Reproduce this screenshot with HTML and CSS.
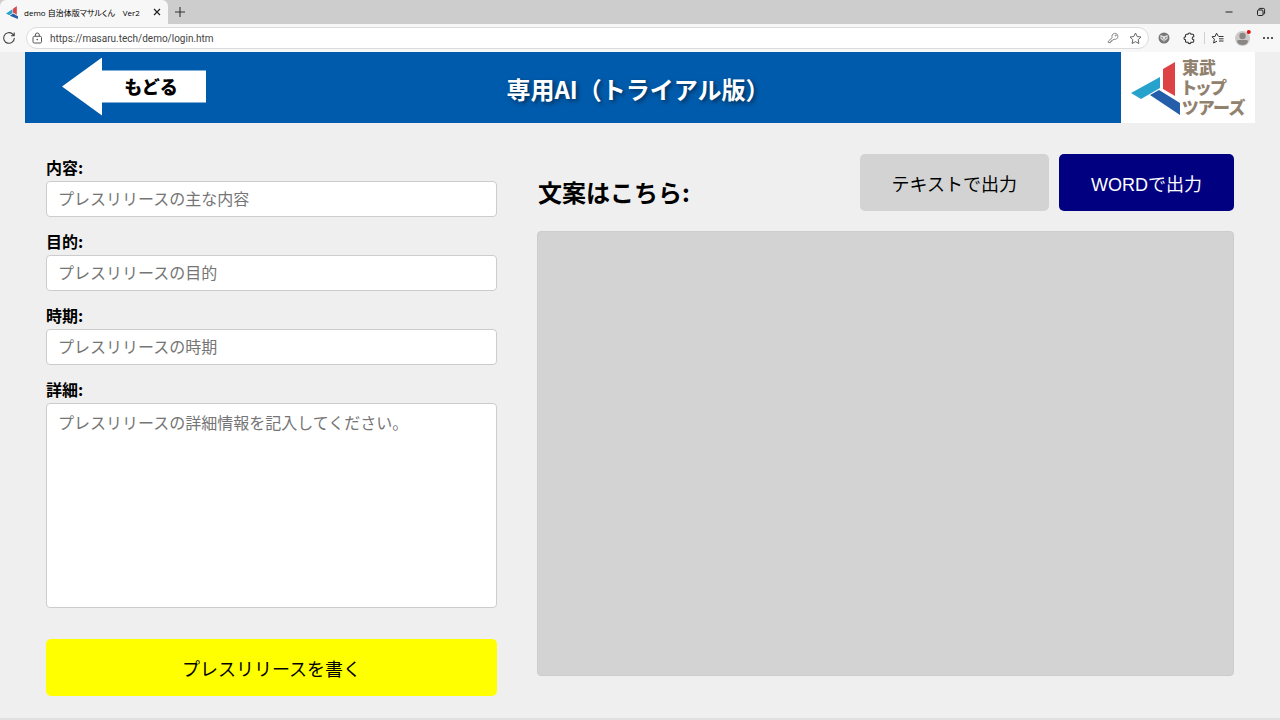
FILE: index.html
```html
<!DOCTYPE html>
<html lang="ja">
<head>
<meta charset="utf-8">
<title>demo 自治体版マサルくん Ver2</title>
<link rel="stylesheet" href="styles.css">
</head>
<body>
<div class="tabs">
  <div class="tab">
    <svg class="favicon" width="13" height="13" viewBox="0 0 12 12"><path d="M6.500 2.500L10 0v8L6.500 6z" fill="#d9474b"/><path d="M0 7l6-4v3.500L3 8.500z" fill="#27a2cc"/><path d="M3.500 9l3-2L11 9.500V12z" fill="#2460a8"/></svg>
    <span class="tab-title">demo 自治体版マサルくん　Ver2</span>
    <button class="icon" aria-label="タブを閉じる"><svg width="10" height="10" viewBox="0 0 10 10"><path d="M2 2l6 6M8 2L2 8" stroke="#222" stroke-width="1.2"/></svg></button>
  </div>
  <button class="icon new-tab" aria-label="新しいタブ"><svg width="12" height="12" viewBox="0 0 12 12"><path d="M6 1v10M1 6h10" stroke="#333" stroke-width="1.1"/></svg></button>
  <div class="window-buttons">
    <button class="icon" aria-label="最小化"><svg width="10" height="10" viewBox="0 0 10 10"><path d="M1.500 5h7" stroke="#222"/></svg></button>
    <button class="icon" aria-label="元に戻す"><svg width="10" height="10" viewBox="0 0 10 10" fill="none" stroke="#222"><rect x="1.500" y="3" width="5.500" height="5.500" rx="1"/><path d="M3 3V2q0-.6.600-.6H7.400q1.200 0 1.200 1.200v3.600q0 .8-.8.800H7"/></svg></button>
  </div>
</div>
<div class="toolbar">
  <button class="icon" aria-label="更新"><svg width="14" height="14" viewBox="0 0 14 14" fill="none" stroke="#444" stroke-width="1.100"><path d="M12.300 7A5.300 5.300 0 1 1 10.500 3L12 4.500M12.200 1.500v3.200H9"/></svg></button>
  <div class="address">
    <svg width="11" height="12" viewBox="0 0 11 12" fill="none" stroke="#555"><rect x="1" y="4.300" width="8.500" height="6.700" rx="1.300"/><path d="M3.300 4.300V3a2 2 0 0 1 4 0v1.300"/><circle cx="5.250" cy="7.600" r=".8" fill="#555" stroke="none"/></svg>
    <input class="url" type="text" aria-label="アドレス" value="https://masaru.tech/demo/login.htm">
    <button class="icon" aria-label="パスワード"><svg width="12" height="12" viewBox="0 0 12 12" fill="none" stroke="#777" stroke-width=".9"><path d="M5.200 5.600A3 3 0 1 1 7 7.200L5.800 8.200H4.700v1.200H3.500v1.200H1.300V9.200z"/><circle cx="8.700" cy="3.500" r=".5"/></svg></button>
    <button class="icon" aria-label="お気に入りに追加"><svg width="13" height="13" viewBox="0 0 13 13" fill="none" stroke="#666" stroke-linejoin="round"><path d="M6.500 1l1.700 3.500 3.800.5-2.800 2.700.7 3.800-3.400-1.800-3.400 1.800.7-3.800L1 5l3.800-.5z"/></svg></button>
  </div>
  <div class="extensions">
    <button class="icon" aria-label="拡張機能"><svg width="12" height="12" viewBox="0 0 12 12"><circle cx="6" cy="6" r="5.500" fill="#777"/><path d="M2.500 2.800L5 4h2l2.500-1.200.2 3.700L6 9.700 2.300 6.500z" fill="#ddd"/><path d="M3.500 5.500l1.500.8M8.500 5.500L7 6.300M5.300 8h1.400" stroke="#666"/></svg></button>
    <button class="icon" aria-label="拡張機能の管理"><svg width="13" height="13" viewBox="0 0 13 13" fill="none" stroke="#333" stroke-width="1.100"><path d="M3.500 2.300H5a1.500 1.300 0 0 1 3 0h1.700q1 0 1 1v1.400a1.400 1.400 0 0 0 0 3v1.600q0 1-1 1H8a1.500 1.300 0 0 1-3 0H3.500q-1 0-1-1V7.700a1.400 1.400 0 0 1 0-3V3.300q0-1 1-1z"/></svg></button>
    <span class="divider"></span>
    <button class="icon" aria-label="お気に入り"><svg width="13" height="13" viewBox="0 0 13 13" fill="none" stroke="#333"><path d="M7.500 4.500L5.500 1.200 4.200 4.300 1 4.800l2.400 2.400-.8 3.800 3.400-1.800M8 4.500h4.500M8 6.800h4.500M8 9h4.500"/></svg></button>
    <button class="icon avatar" aria-label="プロフィール"><svg width="18" height="18" viewBox="0 0 18 18"><circle cx="8.500" cy="9.500" r="7.500" fill="#cbc9c8"/><circle cx="8.500" cy="7" r="3.200" fill="#8b8785"/><path d="M3 12.500q0-1.500 1.500-1.500h8q1.500 0 1.500 1.500-1 3.500-5.500 3.500T3 12.500z" fill="#8b8785"/><circle cx="14.800" cy="3" r="2" fill="#d11"/></svg></button>
    <button class="icon" aria-label="設定など"><svg width="12" height="12" viewBox="0 0 12 12" fill="#222"><circle cx="2" cy="6" r="1"/><circle cx="6" cy="6" r="1"/><circle cx="10" cy="6" r="1"/></svg></button>
  </div>
</div>
<main class="page">
  <header class="banner">
    <button class="back">もどる</button>
    <h1 class="title">専用AI（トライアル版）</h1>
    <div class="logo">
      <svg width="50" height="56" viewBox="0 0 50 56"><path d="M33 10L45 3v34L33 30z" fill="#dd4245"/><path d="M1 34l29-16v11L11 40z" fill="#27a2cc"/><path d="M20 36l9-5 21 13v12z" fill="#245daa"/></svg>
      <div class="logo-text"><span>東武</span><span>トップ</span><span>ツアーズ</span></div>
    </div>
  </header>
  <div class="columns">
    <form class="form">
      <label class="label" for="content">内容:</label>
      <input class="field" id="content" type="text" placeholder="プレスリリースの主な内容">
      <label class="label" for="purpose">目的:</label>
      <input class="field" id="purpose" type="text" placeholder="プレスリリースの目的">
      <label class="label" for="period">時期:</label>
      <input class="field" id="period" type="text" placeholder="プレスリリースの時期">
      <label class="label" for="detail">詳細:</label>
      <textarea class="field detail" id="detail" placeholder="プレスリリースの詳細情報を記入してください。"></textarea>
      <button class="button write" type="button">プレスリリースを書く</button>
    </form>
    <section class="result">
      <div class="result-head">
        <h2 class="result-title">文案はこちら:</h2>
        <button class="button">テキストで出力</button>
        <button class="button word">WORDで出力</button>
      </div>
      <div class="output"></div>
    </section>
  </div>
</main>
</body>
</html>
```
FILE: styles.css
```css
* {
  box-sizing: border-box;
}

body {
  margin: 0;
  min-height: 100vh;
  display: flex;
  flex-direction: column;
  background: #efefef;
  color: #000;
  font-family: "Noto Sans CJK JP", sans-serif;
}

button,
input,
textarea {
  font-family: inherit;
  color: inherit;
}

.icon {
  display: flex;
  padding: 0;
  border: 0;
  background: none;
}

.tabs {
  display: flex;
  align-items: center;
  height: 24px;
  background: #cdcdcd;
}

.tab {
  display: flex;
  align-items: center;
  width: 168px;
  height: 24px;
  padding: 0 6px;
  border-radius: 6px 6px 0 0;
  background: #f7f7f7;
}

.tab-title {
  flex: 1;
  margin-left: 5px;
  font-family: "Open Sans", "Noto Sans CJK JP", sans-serif;
  font-size: 8px;
  font-feature-settings: "palt";
  white-space: nowrap;
}

.new-tab {
  margin-left: 6px;
}

.window-buttons {
  display: flex;
  gap: 22px;
  margin-left: auto;
  padding-right: 14px;
}

.toolbar {
  display: flex;
  align-items: center;
  height: 28px;
  padding: 0 6px 0 2px;
  background: #f7f7f7;
}

.address {
  flex: 1;
  display: flex;
  align-items: center;
  gap: 10px;
  height: 22px;
  margin: 0 9px 0 10px;
  padding: 0 6px 0 5px;
  border: 1px solid #dcdcdc;
  border-radius: 11px;
  background: #fff;
}

.url {
  flex: 1;
  min-width: 0;
  padding: 0;
  margin-left: -3px;
  border: 0;
  background: none;
  color: #444;
  font-family: Roboto, sans-serif;
  font-size: 10px;
}

.extensions {
  display: flex;
  align-items: center;
  gap: 10px;
}

.extensions > :first-child {
  margin-right: 3px;
}

.divider {
  width: 1px;
  height: 12px;
  margin: 0 -4px 0 -2px;
  background: #d0d0d0;
}

.page {
  flex: 1;
  display: flex;
  flex-direction: column;
  padding: 0 25px;
  border-bottom: 2px solid #e0e0e0;
}

.banner {
  display: grid;
  grid-template-columns: 1fr auto 1fr;
  align-items: center;
  height: 71px;
  background: #005bac;
}

.back {
  width: 144px;
  height: 58px;
  margin: 0 0 2px 37px;
  padding: 0 0 2px 34px;
  border: 0;
  background: #fff;
  clip-path: polygon(0 50%, 40px 0, 40px 13px, 100% 13px, 100% 45px, 40px 45px, 40px 100%);
  font-size: 18px;
  font-weight: 900;
}

.title {
  margin: 0;
  padding: 3px 4px 0 0;
  color: #fff;
  font-size: 24px;
  line-height: 36px;
  text-shadow: 2px 2px 4px rgba(0, 0, 0, 0.5);
}

.logo {
  justify-self: end;
  display: flex;
  align-items: center;
  gap: 2px;
  width: 134px;
  height: 71px;
  padding: 0 0 2px 9px;
  background: #fff;
}

.logo-text {
  display: flex;
  flex-direction: column;
  color: #91826f;
  font-size: 17px;
  font-weight: 900;
  line-height: 20px;
  font-feature-settings: "palt";
  white-space: nowrap;
}

.columns {
  flex: 1;
  display: grid;
  grid-template-columns: 2fr 3fr;
  padding-top: 31px;
}

.form {
  display: flex;
  flex-direction: column;
  padding: 0 20px 22px 21px;
}

.label {
  font-size: 16px;
  font-weight: 700;
  line-height: 27px;
}

.field {
  width: 100%;
  height: 36px;
  margin: 0 0 11px;
  padding: 0 11px 2px;
  border: 1px solid #ccc;
  border-radius: 4px;
  background: #fff;
  font-size: 16px;
}

.field::placeholder {
  color: #757575;
}

.detail {
  flex: 1;
  min-height: 204px;
  margin-bottom: 31px;
  padding-top: 6px;
  line-height: 24px;
  resize: none;
}

.result {
  display: flex;
  flex-direction: column;
  padding: 0 21px 42px 20px;
}

.result-head {
  display: flex;
  align-items: center;
  gap: 10px;
  margin-bottom: 20px;
}

.result-title {
  flex: 1;
  margin: 0;
  padding: 19px 0 0 1px;
  font-size: 24px;
  line-height: 36px;
}

.button {
  height: 57px;
  padding: 0 32px;
  border: 0;
  border-radius: 5px;
  background: #d3d3d3;
  font-family: "Liberation Sans", "Noto Sans CJK JP", sans-serif;
  font-size: 18px;
}

.word {
  background: #000080;
  color: #fff;
}

.write {
  background: #ff0;
}

.output {
  flex: 1;
  min-height: 200px;
  border: 1px solid #ccc;
  border-radius: 4px;
  background: #d3d3d3;
}
```
